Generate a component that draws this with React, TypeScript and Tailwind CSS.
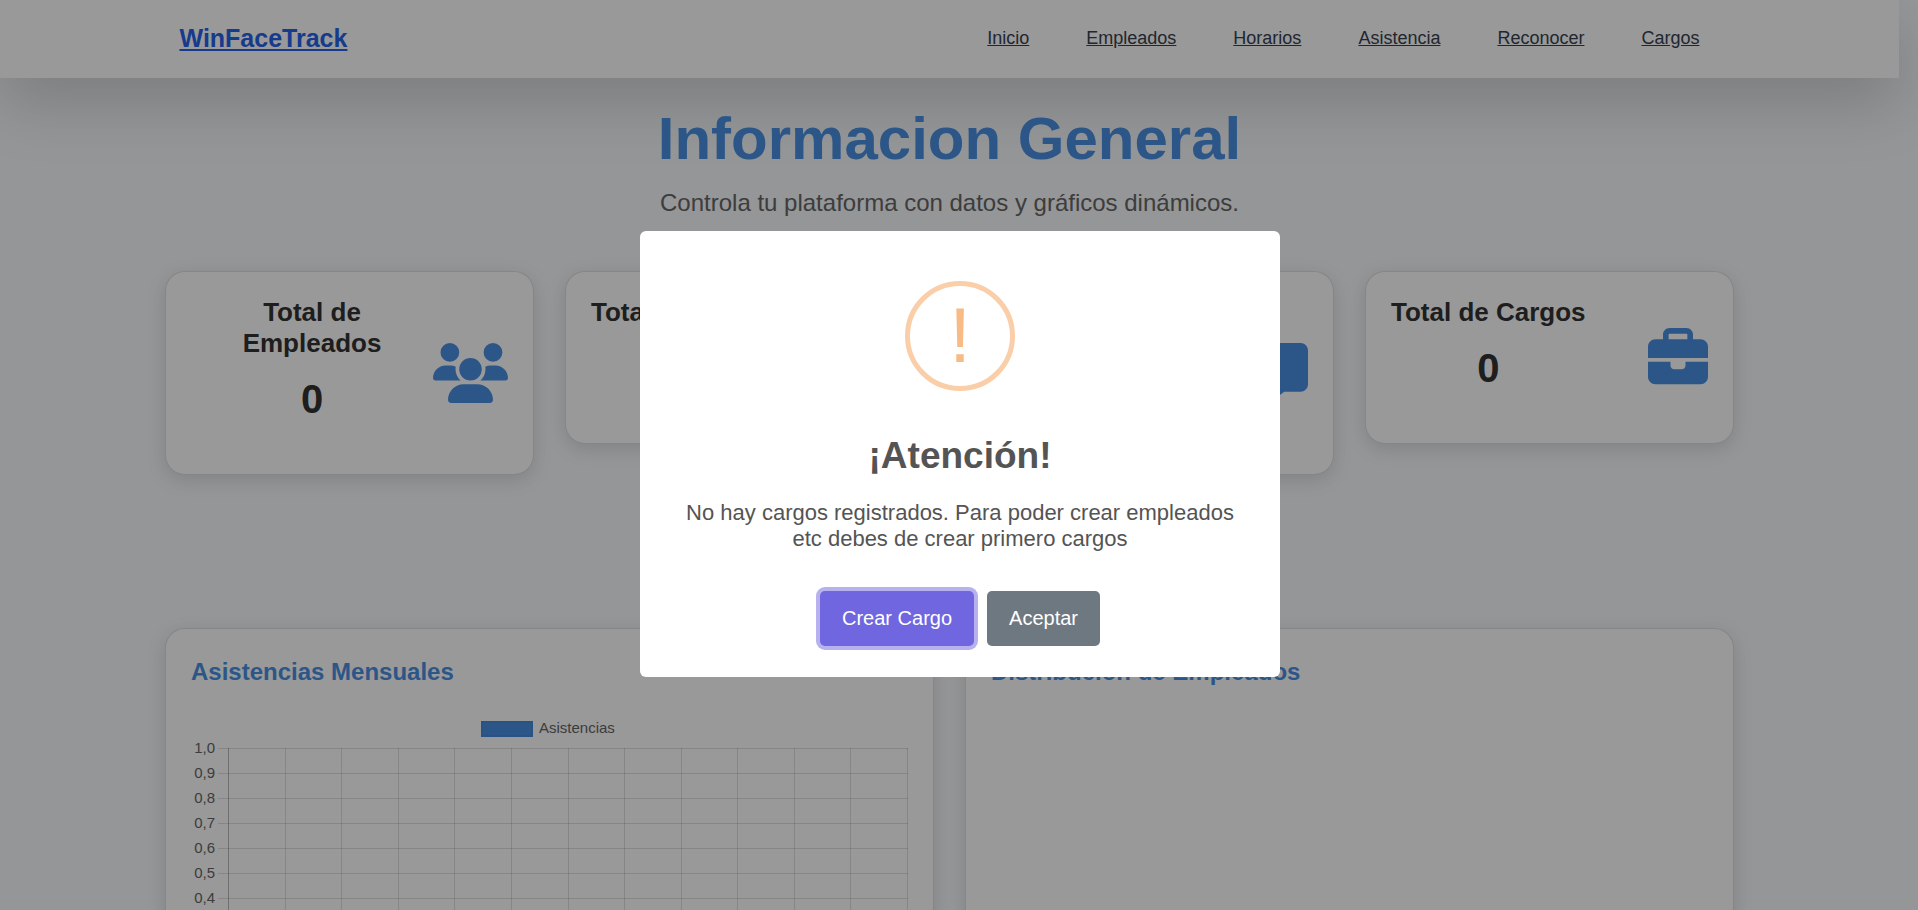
import React from "react";
import { FaBriefcase, FaClock, FaMessage, FaUsers } from "react-icons/fa6";
import type { IconType } from "react-icons";

const NAV_LINKS = ["Inicio", "Empleados", "Horarios", "Asistencia", "Reconocer", "Cargos"];

type Stat = { title: string; value: number; Icon: IconType; iconClass: string };

const STATS: Stat[] = [
  { title: "Total de Empleados", value: 0, Icon: FaUsers, iconClass: "w-[75px]" },
  { title: "Total de Horarios", value: 0, Icon: FaClock, iconClass: "w-[60px]" },
  { title: "Total de Reconocimientos", value: 0, Icon: FaMessage, iconClass: "w-[60px]" },
  { title: "Total de Cargos", value: 0, Icon: FaBriefcase, iconClass: "w-[60px]" },
];

const Y_TICKS = ["1,0", "0,9", "0,8", "0,7", "0,6", "0,5", "0,4"];

function Navbar() {
  return (
    <nav className="bg-white shadow-[0_25px_62px_rgba(0,0,0,0.17)]">
      <div className="mx-auto flex max-w-[1600px] items-center justify-between px-[30px] pt-5 pb-[22px]">
        <a href="#inicio" className="text-[25px] leading-9 font-bold text-[#2563eb] underline">
          WinFaceTrack
        </a>
        <ul className="flex gap-[17px] text-[18px] leading-9">
          {NAV_LINKS.map((label) => (
            <li key={label}>
              <a href={`#${label.toLowerCase()}`} className="px-5 text-[#374151] underline">
                {label}
              </a>
            </li>
          ))}
        </ul>
      </div>
    </nav>
  );
}

function StatCard({ title, value, Icon, iconClass }: Stat) {
  return (
    <article className="flex items-center justify-between rounded-[20px] border border-black/12 bg-white p-[25px] shadow-[0_5px_19px_rgba(0,0,0,0.13)]">
      <div className="text-center text-[#333333]">
        <h2 className="mb-[10px] text-[26px] leading-[31px] font-bold">{title}</h2>
        <p className="mb-5 text-[40px] leading-[60px] font-bold">{value}</p>
      </div>
      <Icon className={`h-[60px] shrink-0 text-[#4a90e2] ${iconClass}`} aria-hidden="true" />
    </article>
  );
}

function AttendanceChart() {
  const left = 37;
  const right = 716;
  const top = 38;
  const rowHeight = 25;
  const bottom = top + rowHeight * 10;
  const columns = Array.from({ length: 13 }, (_, i) => Math.round(left + ((right - left) / 12) * i));

  return (
    <svg viewBox="0 0 717 358" className="block w-full text-[15px]" role="img" aria-label="Asistencias Mensuales">
      <rect x="290" y="11" width="52" height="16" fill="#4a90e2" />
      <rect x="291" y="12" width="50" height="14" fill="none" stroke="#357ab8" strokeOpacity="0.4" />
      <text x="348" y="23" fill="#666666">
        Asistencias
      </text>
      {Y_TICKS.map((tick, i) => (
        <g key={tick}>
          <text x="24" y={top + rowHeight * i + 5} textAnchor="end" fill="#666666">
            {tick}
          </text>
          <path d={`M27 ${top + rowHeight * i + 0.5}H${right + 1}`} stroke="#000000" strokeOpacity="0.12" />
        </g>
      ))}
      {columns.map((x, i) => (
        <path key={x} d={`M${x + 0.5} ${top}V${bottom + 10}`} stroke="#000000" strokeOpacity={i === 0 ? 0.27 : 0.12} />
      ))}
    </svg>
  );
}

function ChartCard({ title, children }: { title: string; children?: React.ReactNode }) {
  return (
    <section className="min-h-[460px] rounded-[20px] border border-black/12 bg-white p-[25px] shadow-[0_5px_19px_rgba(0,0,0,0.13)]">
      <h2 className="mb-5 text-[24px] leading-9 font-bold text-[#4a90e2]">{title}</h2>
      {children}
    </section>
  );
}

function WarningDialog() {
  return (
    <div className="fixed inset-0 flex items-center justify-center bg-black/40 pb-0.5 pl-0.5">
      <div
        role="alertdialog"
        aria-modal="true"
        aria-labelledby="dialog-title"
        aria-describedby="dialog-text"
        className="flex w-[640px] max-w-full flex-col items-center rounded-md bg-white pt-[50px] pb-[31px] text-center text-[#545454]"
      >
        <div className="flex size-[110px] justify-center rounded-full border-[5px] border-[#facea8] text-[78px] leading-[98px] text-[#f8bb86]">
          !
        </div>
        <h2 id="dialog-title" className="mt-[43px] text-[37px] leading-[43px] font-bold">
          ¡Atención!
        </h2>
        <p id="dialog-text" className="mt-[23px] px-9 text-[22px] leading-[26px]">
          No hay cargos registrados. Para poder crear empleados etc debes de crear primero cargos
        </p>
        <div className="mt-[39px] flex gap-[13px] text-[20px] leading-[55px] text-white">
          <button type="button" className="rounded-[5px] bg-[#7066e0] px-[22px] ring-4 ring-[#7066e0]/50">
            Crear Cargo
          </button>
          <button type="button" className="rounded-[5px] bg-[#6e7881] px-[22px]">
            Aceptar
          </button>
        </div>
      </div>
    </div>
  );
}

export default function App() {
  return (
    <div className="h-screen overflow-hidden bg-[#f8fafc] pr-[19px] font-['Liberation_Sans',Arial,sans-serif]">
      <Navbar />
      <main className="mx-auto max-w-[1569px] pt-[25px]">
        <header className="text-center">
          <h1 className="mb-[10px] text-[60px] leading-[72px] font-bold text-[#4a90e2]">Informacion General</h1>
          <p className="text-[24px] leading-9 text-[#666666]">Controla tu plataforma con datos y gráficos dinámicos.</p>
        </header>
        <div className="mt-[50px] grid min-h-[357px] grid-cols-4 items-start gap-[31px]">
          {STATS.map((stat) => (
            <StatCard key={stat.title} {...stat} />
          ))}
        </div>
        <div className="grid grid-cols-2 gap-[31px]">
          <ChartCard title="Asistencias Mensuales">
            <AttendanceChart />
          </ChartCard>
          <ChartCard title="Distribución de Empleados" />
        </div>
      </main>
      <WarningDialog />
    </div>
  );
}
